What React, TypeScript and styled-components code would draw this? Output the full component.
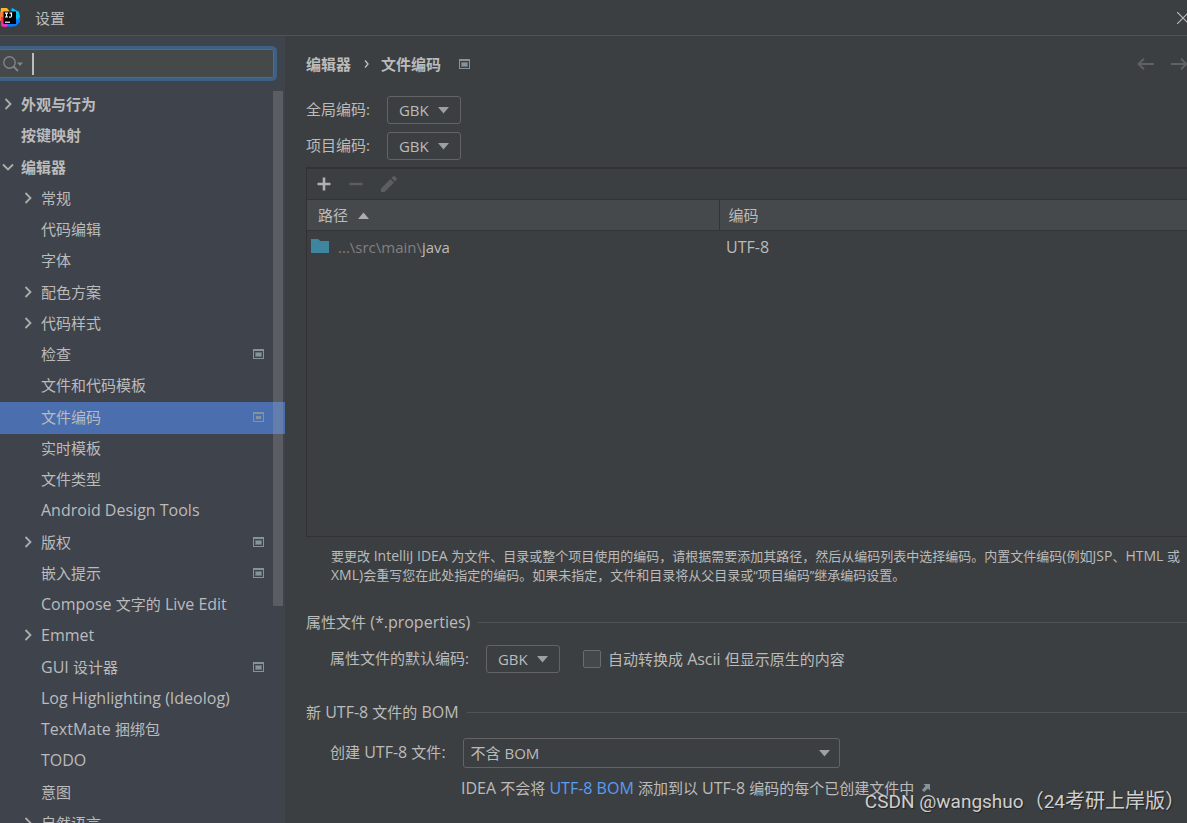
import React from "react";
import styled, { createGlobalStyle } from "styled-components";

const GlobalStyle = createGlobalStyle`
  * { box-sizing: border-box; }
  body {
    margin: 0;
    overflow: hidden;
    background: #3c3f41;
    color: #bbbbbb;
    font-family: "Open Sans", "Noto Sans CJK SC", sans-serif;
    font-size: 15px;
    line-height: 20px;
  }
  button, input, select { font: inherit; color: inherit; }
  button { padding: 0; border: 0; background: none; display: flex; }
  ul { margin: 0; padding: 0; list-style: none; }
`;

const Window = styled.div`
  display: flex;
  flex-direction: column;
  height: 100vh;
  overflow: hidden;
`;

const TitleBar = styled.header`
  display: flex;
  align-items: center;
  flex: none;
  height: 36px;
  gap: 15px;
  border-bottom: 1px solid #515456;
`;

const WindowTitle = styled.h1`
  flex: 1;
  margin: 0;
  font-size: 15px;
  font-weight: 400;
`;

const CloseButton = styled.button`
  margin-right: -2px;
`;

const Body = styled.div`
  display: flex;
  flex: 1;
  min-height: 0;
`;

const Sidebar = styled.aside`
  position: relative;
  display: flex;
  flex-direction: column;
  flex: none;
  width: 285px;
  padding-top: 10px;
  overflow: hidden;
  background: #3f434c;
`;

const SearchBox = styled.label`
  display: flex;
  align-items: center;
  flex: none;
  width: 281px;
  height: 35px;
  margin-left: -4px;
  padding-left: 4px;
  gap: 9px;
  border: 3px solid #3d6185;
  border-radius: 5px;
  background: #45494a;
  box-shadow: inset 0 0 0 1px #466d94;
`;

const SearchInput = styled.input`
  flex: 1;
  min-width: 0;
  height: 22px;
  padding: 0;
  border: 0;
  border-left: 2px solid #bbbbbb;
  outline: none;
  background: transparent;
`;

const Tree = styled.ul`
  flex: none;
  margin-top: 9px;
`;

const TreeRow = styled.li<{ $level: number; $bold?: boolean; $selected?: boolean }>`
  display: flex;
  align-items: center;
  height: 31px;
  padding-left: ${(p) => (p.$level ? 21 : 1)}px;
  padding-right: 21px;
  padding-bottom: 3px;
  gap: 6px;
  font-weight: ${(p) => (p.$bold ? 600 : 400)};
  background: ${(p) => (p.$selected ? "#4b6eaf" : "transparent")};
  &:nth-child(4n + 3) { height: 32px; }
`;

const TreeLabel = styled.span`
  flex: 1;
  white-space: nowrap;
`;

const ArrowSlot = styled.span`
  display: flex;
  flex: none;
  width: 14px;
`;

const ScrollThumb = styled.div`
  position: absolute;
  top: 55px;
  right: 2px;
  width: 10px;
  height: 515px;
  background: rgba(166, 166, 166, 0.27);
`;

const Main = styled.main`
  flex: 1;
  min-width: 0;
  padding: 16px 0 0 21px;
  overflow: hidden;
`;

const HeaderRow = styled.div`
  display: flex;
  align-items: center;
  justify-content: space-between;
  height: 24px;
`;

const Crumbs = styled.nav`
  display: flex;
  align-items: center;
  font-weight: 600;
`;

const CrumbArrow = styled.span`
  display: flex;
  margin: 0 12px 0 13px;
`;

const CrumbMark = styled.span`
  display: flex;
  margin-left: 18px;
`;

const History = styled.div`
  display: flex;
  gap: 17px;
  margin-right: -1px;
`;

const FormRow = styled.div<{ $top: number; $indent?: boolean }>`
  display: flex;
  align-items: center;
  margin-top: ${(p) => p.$top}px;
  padding-left: ${(p) => (p.$indent ? 24 : 0)}px;
`;

const FieldLabel = styled.label`
  margin-right: 17px;
  padding-bottom: 2px;
  white-space: nowrap;
`;

const SelectBox = styled.span<{ $wide?: boolean }>`
  position: relative;
  display: flex;
  width: ${(p) => (p.$wide ? 377 : 74)}px;
  height: ${(p) => (p.$wide ? 30 : 28)}px;
`;

const Select = styled.select<{ $wide?: boolean }>`
  appearance: none;
  width: 100%;
  padding: 0 ${(p) => (p.$wide ? 30 : 10)}px 0 ${(p) => (p.$wide ? 7 : 11)}px;
  border: 1px solid #646464;
  border-radius: 3px;
  outline: none;
  background: #3c3f41;
`;

const SelectArrow = styled.svg<{ $wide?: boolean }>`
  position: absolute;
  top: ${(p) => (p.$wide ? 12 : 11)}px;
  right: ${(p) => (p.$wide ? 10 : 12)}px;
  pointer-events: none;
`;

const TablePanel = styled.section`
  margin-top: 7px;
  height: 370px;
  border: 1px solid #323232;
  border-width: 2px 0 1px 1px;
`;

const Toolbar = styled.div`
  display: flex;
  align-items: center;
  height: 30px;
  padding-left: 9px;
  gap: 16px;
`;

const PathTable = styled.table`
  width: 100%;
  border-collapse: collapse;
  table-layout: fixed;
  text-align: left;
`;

const HeadCell = styled.th<{ $first?: boolean }>`
  width: ${(p) => (p.$first ? "412px" : "auto")};
  height: 31px;
  padding: 0 0 0 ${(p) => (p.$first ? 11 : 9)}px;
  border: 1px solid #323537;
  border-width: 1px ${(p) => (p.$first ? 1 : 0)}px 1px 0;
  background: #45494b;
  font-weight: 400;
`;

const Cell = styled.td<{ $first?: boolean }>`
  height: 32px;
  padding: 0 0 0 ${(p) => (p.$first ? 4 : 7)}px;
`;

const Inline = styled.span<{ $gap: number }>`
  display: flex;
  align-items: center;
  gap: ${(p) => p.$gap}px;
`;

const Dim = styled.span`
  color: #808080;
`;

const Note = styled.p`
  margin: 10px 0 0;
  padding: 0 4px 0 25px;
  font-size: 13px;
  line-height: 19px;
`;

const SectionTitle = styled.h2<{ $top: number }>`
  display: flex;
  align-items: center;
  gap: 8px;
  margin: ${(p) => p.$top}px 0 0;
  font-size: 15px;
  font-weight: 400;
  white-space: nowrap;
  &::after {
    content: "";
    flex: 1;
    height: 1px;
    background: #515456;
  }
`;

const CheckLabel = styled.label`
  display: flex;
  align-items: center;
  gap: 7px;
  margin-left: 23px;
`;

const Checkbox = styled.input`
  appearance: none;
  width: 18px;
  height: 18px;
  margin: 0;
  border: 1px solid #6b6b6b;
  border-radius: 2px;
  background: #43494a;
`;

const Hint = styled.p`
  display: flex;
  align-items: center;
  margin: 10px 0 0;
  padding-left: 155px;
  gap: 8px;
  white-space: pre;
`;

const Link = styled.a`
  color: #589df6;
  text-decoration: none;
`;

const LatinRun = styled.span<{ $small?: boolean }>`
  font-size: ${(p) => (p.$small ? 14 : 16)}px;
  line-height: 1px;
`;

const Watermark = styled.div`
  position: absolute;
  right: 2px;
  bottom: 7px;
  color: #cfcfcf;
  font-family: "Noto Sans CJK SC", sans-serif;
  font-size: 20px;
  line-height: 28px;
  white-space: nowrap;
  text-shadow: 1px 1px 1px #222222;
`;

const WatermarkLatin = styled.span`
  font-family: Roboto, sans-serif;
  font-size: 19px;
`;

/* Latin letters are set one pixel larger than the Chinese beside them. */
function Text({ children, small }: { children: string; small?: boolean }) {
  return (
    <>
      {children.split(/([\x20-\x7e]+)/).filter(Boolean).map((run, i) =>
        /^[\x20-\x7e]/.test(run) ? <LatinRun key={i} $small={small}>{run}</LatinRun> : run
      )}
    </>
  );
}

function Logo() {
  return (
    <svg width="20" height="20" viewBox="0 0 20 20" aria-hidden="true">
      <path d="M1 0h6l3 4-6 7-4-3z" fill="#fdb62f" />
      <path d="M0 5 4 3v9l-4 1z" fill="#f97a3d" />
      <path d="M1 9h3l4 8-4 2-3-1z" fill="#fe2876" />
      <path d="M2 15h8l-3 4-5-1z" fill="#d63bc8" />
      <path d="M10 3 12 0l3 2 4 2 1 10-4 4-7 1-2-3 7-5z" fill="#087cfa" />
      <path d="M12 0 19 4l1 5-3 3-5-8z" fill="#07c3f2" />
      <path d="M3.500 3.500h12.500v12.500H3.500z" fill="#000" />
      <path d="M5 5.200h3M6.500 5v4M5 9h3M9.500 5.200h2v2.700q0 1.200-1.200 1.200H9" fill="none" stroke="#fff" strokeWidth="1.200" />
      <path d="M5 13.600h5v1.200H5z" fill="#fff" />
    </svg>
  );
}

function TreeArrow({ open }: { open?: boolean }) {
  return open ? (
    <svg width="14" height="12" viewBox="0 0 14 12" aria-hidden="true">
      <path d="M2 3.500 7 8.500 12 3.500" fill="none" stroke="#adadad" strokeWidth="1.800" />
    </svg>
  ) : (
    <svg width="14" height="12" viewBox="0 0 14 12" aria-hidden="true">
      <path d="M4.500 1 9.500 6 4.500 11" fill="none" stroke="#adadad" strokeWidth="1.800" />
    </svg>
  );
}

function ProjectMark() {
  return (
    <svg width="11" height="10" viewBox="0 0 11 10" aria-hidden="true">
      <path d="M0 0h11v10H0zM1 2v7h9V2z" fill="#87939a" fillRule="evenodd" />
      <path d="M2.500 3.500h6v4h-6z" fill="#87939a" stroke="#687178" />
    </svg>
  );
}

function EncodingSelect({ id, value, wide }: { id: string; value: string; wide?: boolean }) {
  return (
    <SelectBox $wide={wide}>
      <Select id={id} $wide={wide} defaultValue={value}>
        <option>{value}</option>
      </Select>
      <SelectArrow $wide={wide} width="11" height="7" viewBox="0 0 11 7" aria-hidden="true">
        <path d="M0 0h11L5.500 6.500z" fill="#9da0a2" />
      </SelectArrow>
    </SelectBox>
  );
}

type Item = { label: string; level: number; arrow?: "open" | "closed"; mark?: boolean; selected?: boolean };

const items: Item[] = [
  { label: "外观与行为", level: 0, arrow: "closed" },
  { label: "按键映射", level: 0 },
  { label: "编辑器", level: 0, arrow: "open" },
  { label: "常规", level: 1, arrow: "closed" },
  { label: "代码编辑", level: 1 },
  { label: "字体", level: 1 },
  { label: "配色方案", level: 1, arrow: "closed" },
  { label: "代码样式", level: 1, arrow: "closed" },
  { label: "检查", level: 1, mark: true },
  { label: "文件和代码模板", level: 1 },
  { label: "文件编码", level: 1, mark: true, selected: true },
  { label: "实时模板", level: 1 },
  { label: "文件类型", level: 1 },
  { label: "Android Design Tools", level: 1 },
  { label: "版权", level: 1, arrow: "closed", mark: true },
  { label: "嵌入提示", level: 1, mark: true },
  { label: "Compose 文字的 Live Edit", level: 1 },
  { label: "Emmet", level: 1, arrow: "closed" },
  { label: "GUI 设计器", level: 1, mark: true },
  { label: "Log Highlighting (Ideolog)", level: 1 },
  { label: "TextMate 捆绑包", level: 1 },
  { label: "TODO", level: 1 },
  { label: "意图", level: 1 },
  { label: "自然语言", level: 1, arrow: "closed" },
];

export default function App() {
  return (
    <Window>
      <GlobalStyle />
      <TitleBar>
        <Logo />
        <WindowTitle>设置</WindowTitle>
        <CloseButton aria-label="关闭">
          <svg width="12" height="12" viewBox="0 0 12 12">
            <path d="M0 0 12 12M12 0 0 12" stroke="#bbbbbb" strokeWidth="1.200" />
          </svg>
        </CloseButton>
      </TitleBar>
      <Body>
        <Sidebar>
          <SearchBox>
            <svg width="20" height="16" viewBox="0 0 20 16" aria-hidden="true">
              <circle cx="6.500" cy="6.500" r="5.700" fill="none" stroke="#7f8689" strokeWidth="1.400" />
              <path d="M10.500 10.500 15 15" stroke="#7f8689" strokeWidth="1.800" />
              <path d="M14 6.500h6L17 10z" fill="#7f8689" />
            </svg>
            <SearchInput type="text" aria-label="搜索" />
          </SearchBox>
          <Tree>
            {items.map((item) => (
              <TreeRow key={item.label} $level={item.level} $bold={item.level === 0} $selected={item.selected}>
                <ArrowSlot>{item.arrow && <TreeArrow open={item.arrow === "open"} />}</ArrowSlot>
                <TreeLabel><Text>{item.label}</Text></TreeLabel>
                {item.mark && <ProjectMark />}
              </TreeRow>
            ))}
          </Tree>
          <ScrollThumb />
        </Sidebar>
        <Main>
          <HeaderRow>
            <Crumbs>
              <span>编辑器</span>
              <CrumbArrow>
                <svg width="5" height="8" viewBox="0 0 5 8" aria-hidden="true">
                  <path d="M1 .5 4 4 1 7.500" fill="none" stroke="#bbbbbb" strokeWidth="1.400" />
                </svg>
              </CrumbArrow>
              <span>文件编码</span>
              <CrumbMark><ProjectMark /></CrumbMark>
            </Crumbs>
            <History>
              <button aria-label="后退">
                <svg width="17" height="12" viewBox="0 0 17 12">
                  <path d="M17 6H2M7 .7 1.500 6 7 11.300" fill="none" stroke="#5f6163" strokeWidth="1.900" />
                </svg>
              </button>
              <button aria-label="前进">
                <svg width="17" height="12" viewBox="0 0 17 12">
                  <path d="M0 6H15M10 .7 15.500 6 10 11.300" fill="none" stroke="#5f6163" strokeWidth="1.900" />
                </svg>
              </button>
            </History>
          </HeaderRow>
          <FormRow $top={20}>
            <FieldLabel htmlFor="global">全局编码:</FieldLabel>
            <EncodingSelect id="global" value="GBK" />
          </FormRow>
          <FormRow $top={8}>
            <FieldLabel htmlFor="project">项目编码:</FieldLabel>
            <EncodingSelect id="project" value="GBK" />
          </FormRow>
          <TablePanel>
            <Toolbar>
              <button aria-label="添加">
                <svg width="16" height="16" viewBox="0 0 16 16">
                  <path d="M8 1.500v13M1.500 8h13" stroke="#afb1b3" strokeWidth="2.600" />
                </svg>
              </button>
              <button aria-label="移除">
                <svg width="16" height="16" viewBox="0 0 16 16">
                  <path d="M1.500 8h13" stroke="#5c5e60" strokeWidth="2.400" />
                </svg>
              </button>
              <button aria-label="编辑">
                <svg width="18" height="18" viewBox="0 0 18 18">
                  <path d="M1 13.500 10.500 4 14 7.500 4.500 17H1zM11.500 3 13 1.500q1-1 2 0L16.500 3q1 1 0 2L15 6.500z" fill="#5c5e60" />
                </svg>
              </button>
            </Toolbar>
            <PathTable>
              <thead>
                <tr>
                  <HeadCell $first>
                    <Inline $gap={10}>
                      路径
                      <svg width="11" height="7" viewBox="0 0 11 7" aria-hidden="true">
                        <path d="M0 7h11L5.500 .5z" fill="#adadad" />
                      </svg>
                    </Inline>
                  </HeadCell>
                  <HeadCell>编码</HeadCell>
                </tr>
              </thead>
              <tbody>
                <tr>
                  <Cell $first>
                    <Inline $gap={9}>
                      <svg width="18" height="16" viewBox="0 0 18 16" aria-hidden="true">
                        <path d="M0 0h7l2.500 2H18v12H0z" fill="#3e86a0" />
                      </svg>
                      <span><Dim>...\src\main\</Dim>java</span>
                    </Inline>
                  </Cell>
                  <Cell><Text>UTF-8</Text></Cell>
                </tr>
              </tbody>
            </PathTable>
          </TablePanel>
          <Note>
            <Text small>
              要更改 IntelliJ IDEA 为文件、目录或整个项目使用的编码，请根据需要添加其路径，然后从编码列表中选择编码。内置文件编码(例如JSP、HTML 或 XML)会重写您在此处指定的编码。如果未指定，文件和目录将从父目录或“项目编码”继承编码设置。
            </Text>
          </Note>
          <SectionTitle $top={27}><span><Text>属性文件 (*.properties)</Text></span></SectionTitle>
          <FormRow $top={13} $indent>
            <FieldLabel htmlFor="properties">属性文件的默认编码:</FieldLabel>
            <EncodingSelect id="properties" value="GBK" />
            <CheckLabel>
              <Checkbox type="checkbox" />
              <span><Text>自动转换成 Ascii 但显示原生的内容</Text></span>
            </CheckLabel>
          </FormRow>
          <SectionTitle $top={29}><span><Text>新 UTF-8 文件的 BOM</Text></span></SectionTitle>
          <FormRow $top={16} $indent>
            <FieldLabel htmlFor="bom"><Text>创建 UTF-8 文件:</Text></FieldLabel>
            <EncodingSelect id="bom" value="不含 BOM" wide />
          </FormRow>
          <Hint>
            <span>
              <Text>IDEA 不会将 </Text>
              <Link href="#bom"><Text>UTF-8 BOM</Text></Link>
              <Text> 添加到以 UTF-8 编码的每个已创建文件中</Text>
            </span>
            <svg width="8" height="8" viewBox="0 0 8 8" aria-hidden="true">
              <path d="M1.500 0H8v6.500L6 4.500 2 8 0 6 3.500 2z" fill="#87939a" />
            </svg>
          </Hint>
        </Main>
      </Body>
      <Watermark>
        <WatermarkLatin>CSDN @wangshuo</WatermarkLatin>（<WatermarkLatin>24</WatermarkLatin>考研上岸版）
      </Watermark>
    </Window>
  );
}
